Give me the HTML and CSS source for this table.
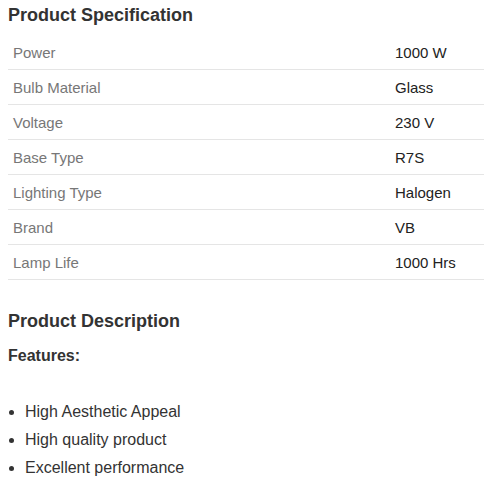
FILE: index.html
```html
<!DOCTYPE html>
<html>
<head>
<meta charset="utf-8">
<link rel="stylesheet" href="styles.css">
</head>
<body>
<h2 class="title">Product Specification</h2>
<table class="spec">
  <tr><td class="label">Power</td><td class="value">1000 W</td></tr>
  <tr><td class="label">Bulb Material</td><td class="value">Glass</td></tr>
  <tr><td class="label">Voltage</td><td class="value">230 V</td></tr>
  <tr><td class="label">Base Type</td><td class="value">R7S</td></tr>
  <tr><td class="label">Lighting Type</td><td class="value">Halogen</td></tr>
  <tr><td class="label">Brand</td><td class="value">VB</td></tr>
  <tr><td class="label">Lamp Life</td><td class="value">1000 Hrs</td></tr>
</table>
<h2 class="title desc-title">Product Description</h2>
<p class="features">Features:</p>
<ul class="list">
  <li>High Aesthetic Appeal</li>
  <li>High quality product</li>
  <li>Excellent performance</li>
</ul>
</body>
</html>
```
FILE: styles.css
```css
body {
  margin: 0;
  padding: 0 0 0 8px;
  font-family: "Liberation Sans", Arial, sans-serif;
  color: #333;
  background: #fff;
}
.title {
  font-size: 18px;
  font-weight: bold;
  color: #333;
  margin: 0;
  padding-top: 4px;
  line-height: 22px;
  height: 31px;
}
.spec {
  width: 476px;
  border-collapse: collapse;
}
.spec td {
  height: 34px;
  padding: 0 5px;
  font-size: 15px;
  border-bottom: 1px solid #e5e5e5;
  vertical-align: middle;
}
.spec .label {
  width: 372px;
  color: #777;
}
.spec .value {
  color: #222;
}
.desc-title {
  margin-top: 30px;
  height: auto;
  padding-top: 0;
}
.features {
  font-size: 16px;
  font-weight: bold;
  margin: 14px 0 0;
  line-height: 20px;
}
.list {
  margin: 32px 0 0;
  padding-left: 17px;
  font-size: 16px;
  line-height: 28px;
  color: #333;
}
```
